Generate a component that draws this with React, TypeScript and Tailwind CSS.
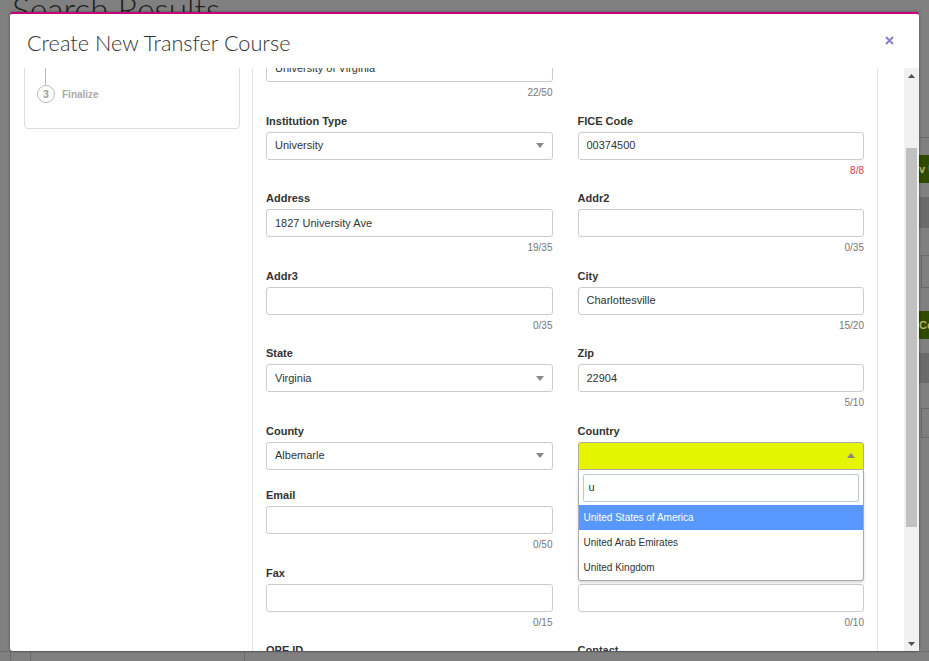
import React from "react";

const font = { fontFamily: '"Liberation Sans", Arial, sans-serif' };

interface FieldProps {
    label: string;
    value?: string;
    counter?: string;
    counterRed?: boolean;
    select?: boolean;
}

const Caret = ({ up }: { up?: boolean }) => (
    <svg width="8" height="5" viewBox="0 0 8 5" className="shrink-0">
        {up ? (
            <path d="M0 5 L4 0 L8 5 Z" fill="#888" />
        ) : (
            <path d="M0 0 L8 0 L4 5 Z" fill="#888" />
        )}
    </svg>
);

const Field: React.FC<FieldProps> = ({ label, value = "", counter, counterRed, select }) => (
    <div className="mb-[13.5px]">
        <div className="h-[14px] leading-[14px] text-[11px] font-bold text-[#333] mb-[4px] whitespace-nowrap">
            {label}
        </div>
        <div className="h-[28px] border border-[#ccc] rounded-[3px] bg-white flex items-center pl-[8px] pr-[8px] text-[11px] text-[#333]">
            <span className="flex-1 truncate">{value}</span>
            {select && <Caret />}
        </div>
        {counter !== undefined ? (
            <div
                className={`mt-[4px] h-[14px] leading-[14px] text-right text-[10px] ${
                    counterRed ? "text-[#e0364f]" : "text-[#777]"
                }`}
            >
                {counter}
            </div>
        ) : (
            <div className="h-[5px]" />
        )}
    </div>
);

const CountryField = () => (
    <div className="mb-[13.5px] relative">
        <div className="h-[14px] leading-[14px] text-[11px] font-bold text-[#333] mb-[4px]">Country</div>
        <div className="h-[28px] border border-[#aaa] rounded-t-[3px] bg-[#e5f500] flex items-center justify-end pr-[8px]">
            <Caret up />
        </div>
        <div className="h-[5px]" />
        {/* open select2 style dropdown */}
        <div className="absolute left-0 right-0 top-[46px] z-10 bg-white border border-t-0 border-[#aaa] rounded-b-[3px] shadow-[0_2px_3px_rgba(0,0,0,0.15)]">
            <div className="p-[4px] pb-[3px]">
                <div className="h-[28px] border border-[#b9c9da] rounded-[2px] flex items-center pl-[5px] text-[11px] text-[#333]">
                    u
                </div>
            </div>
            <div className="h-[25px] flex items-center pl-[5px] text-[10px] bg-[#5897fb] text-white">
                United States of America
            </div>
            <div className="h-[25px] flex items-center pl-[5px] text-[10px] text-[#333]">United Arab Emirates</div>
            <div className="h-[25px] flex items-center pl-[5px] text-[10px] text-[#333]">United Kingdom</div>
        </div>
    </div>
);

const Step = ({ n, label, active }: { n: number; label: string; active?: boolean }) => (
    <div className="h-[18px] flex items-center gap-[7px]">
        <div
            className={`w-[18px] h-[18px] rounded-full border flex items-center justify-center text-[10px] font-bold ${
                active ? "border-[#7d6fc7] text-[#7d6fc7]" : "border-[#bbb] text-[#999]"
            }`}
        >
            {n}
        </div>
        <span className={`text-[10px] font-bold ${active ? "text-[#555]" : "text-[#aaa]"}`}>{label}</span>
    </div>
);

const Connector = () => <div className="ml-[8px] w-px h-[18px] bg-[#bbb]" />;

const Scrollbar = () => (
    <div className="w-[15px] bg-[#f1f1f1] flex flex-col">
        <div className="h-[15px] flex items-center justify-center">
            <svg width="7" height="4" viewBox="0 0 7 4">
                <path d="M0 4 L3.5 0 L7 4 Z" fill="#505050" />
            </svg>
        </div>
        <div className="flex-1 px-[2px]">
            <div className="mt-[65px] h-[379px] bg-[#c1c1c1]" />
        </div>
        <div className="h-[15px] flex items-center justify-center">
            <svg width="7" height="4" viewBox="0 0 7 4">
                <path d="M0 0 L7 0 L3.5 4 Z" fill="#505050" />
            </svg>
        </div>
    </div>
);

const Background = () => (
    <div className="h-[661px] flex flex-col">
        <div className="flex flex-1">
            <div className="flex-1">
                <h1
                    className="-mt-[9px] ml-[12px] text-[33.5px] leading-[36px] font-light text-[#222]"
                    style={{ fontFamily: "Lato, sans-serif" }}
                >
                    Search Results
                </h1>
            </div>
            {/* strip of the page that shows right of the modal */}
            <div className="w-[10px] flex flex-col overflow-hidden">
                <div className="mt-[137px] h-px bg-[#6e6e6e]" />
                <div className="mt-[17px] h-[28px] bg-[#2e4b00] text-[11px] font-bold text-[#b9b36a] leading-[28px] whitespace-nowrap">
                    v U
                </div>
                <div className="mt-[14px] h-[31px] bg-[#6b6b6b]" />
                <div className="mt-[27px] h-[33px] border border-r-0 border-[#6a6a6a] ml-[2px]" />
                <div className="mt-[23px] h-[28px] bg-[#2e4b00] text-[11px] font-bold text-[#b9b36a] leading-[28px] whitespace-nowrap">
                    Co
                </div>
                <div className="mt-[14px] h-[30px] bg-[#6b6b6b]" />
                <div className="mt-[25px] h-[30px] border border-r-0 border-[#6a6a6a] ml-[2px]" />
            </div>
        </div>
        <div className="h-[10px] flex border-t border-[#6e6e6e]">
            <div className="w-[11px] border-r border-[#6a6a6a]" />
            <div className="w-[20px] border-r border-[#6a6a6a]" />
            <div className="w-[214px] border-r border-[#6a6a6a]" />
            <div className="flex-1" />
        </div>
    </div>
);

export default function App() {
    return (
        <div className="relative w-full h-[661px] overflow-hidden bg-[#808080]" style={font}>
            <Background />

            {/* modal */}
            <div className="absolute left-[10px] top-[12px] w-[909px] h-[639px] bg-white border-t-2 border-[#c4007c] rounded-[3px] shadow-[0_0_3px_rgba(0,0,0,0.45)] flex flex-col">
                <div className="h-[54px] shrink-0 flex items-start justify-between pl-[17px] pr-[25px]">
                    <h2
                        className="pt-[16px] text-[21.7px] leading-[26px] font-light text-[#333]"
                        style={{ fontFamily: "Lato, sans-serif" }}
                    >
                        Create New Transfer Course
                    </h2>
                    <button className="mt-[22px]">
                        <svg width="9" height="9" viewBox="0 0 9 9">
                            <path d="M1 1 L8 8 M8 1 L1 8" stroke="#8a7fd0" strokeWidth="2" />
                        </svg>
                    </button>
                </div>

                <div className="flex-1 flex min-h-0">
                    <div className="flex-1 overflow-hidden">
                        <div className="-mt-[68px] flex min-h-[700px]">
                            {/* stepper */}
                            <div className="w-[242px] shrink-0">
                                <div className="ml-[14px] w-[216px] border border-[#ddd] rounded-[4px] pt-[12px] px-[12px] pb-[25px]">
                                    <Step n={1} label="Institution" />
                                    <Connector />
                                    <Step n={2} label="Courses" />
                                    <Connector />
                                    <Step n={3} label="Finalize" />
                                </div>
                            </div>

                            {/* form */}
                            <div className="w-[626px] shrink-0 border-l border-r border-[#e3e3e3] pl-[13px] pr-[13px] pt-[36px]">
                                <div className="grid grid-cols-2 gap-x-[25px]">
                                    <Field label="Institution Name" value="University of Virginia" counter="22/50" />
                                    <div />
                                    <Field label="Institution Type" value="University" select />
                                    <Field label="FICE Code" value="00374500" counter="8/8" counterRed />
                                    <Field label="Address" value="1827 University Ave" counter="19/35" />
                                    <Field label="Addr2" counter="0/35" />
                                    <Field label="Addr3" counter="0/35" />
                                    <Field label="City" value="Charlottesville" counter="15/20" />
                                    <Field label="State" value="Virginia" select />
                                    <Field label="Zip" value="22904" counter="5/10" />
                                    <Field label="County" value="Albemarle" select />
                                    <CountryField />
                                    <Field label="Email" counter="0/50" />
                                    <Field label="Phone" counter="0/15" />
                                    <Field label="Fax" counter="0/15" />
                                    <Field label="Ext" counter="0/10" />
                                    <Field label="OPE ID" counter="0/10" />
                                    <Field label="Contact" counter="0/50" />
                                </div>
                            </div>
                            <div className="flex-1" />
                        </div>
                    </div>
                    <Scrollbar />
                </div>
            </div>
        </div>
    );
}
